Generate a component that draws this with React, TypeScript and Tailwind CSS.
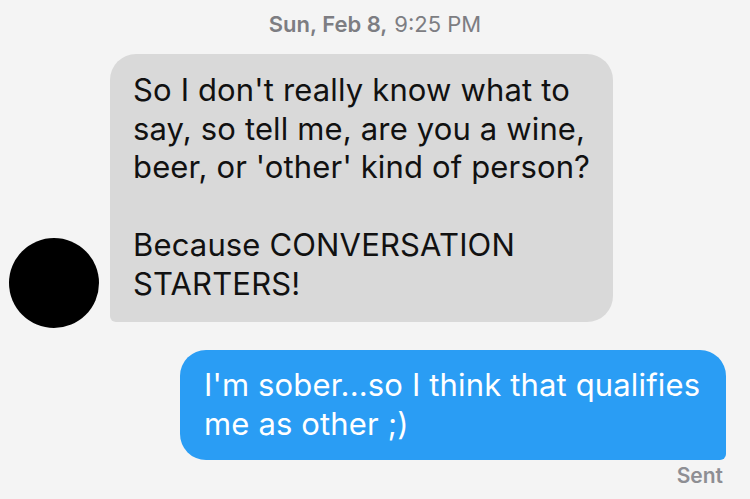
export default function App() {
  const font = { fontFamily: "Inter, 'Liberation Sans', sans-serif" };
  return (
    <div className="w-[750px] h-[499px] overflow-hidden bg-[#f4f4f4] flex flex-col" style={font}>
      <div className="pt-[11px] h-[34px] text-center text-[22px] leading-[26px] text-[#7d7d82]">
        <span className="font-semibold">Sun, Feb 8,</span>
        <span className="ml-[7px]">9:25 PM</span>
      </div>
      <div className="mt-[20px] flex items-end">
        <div className="ml-[9px] mb-[-6px] w-[90px] h-[90px] rounded-full bg-black shrink-0" />
        <div className="ml-[11px] w-[503px] rounded-[26px] rounded-bl-[6px] bg-[#d9d9d9] pl-[23px] pt-[17px] pb-[19px] text-[31px] leading-[38.7px] text-[#111] whitespace-nowrap tracking-[0.15px]">
          So I don't really know what to
          <br />
          say, so tell me, are you a wine,
          <br />
          beer, or 'other' kind of person?
          <br />
          <br />
          Because CONVERSATION
          <br />
          STARTERS!
        </div>
      </div>
      <div className="mt-[28px] flex justify-end pr-[24px]">
        <div className="w-[546px] rounded-[26px] rounded-br-[6px] bg-[#2a9df4] pl-[24px] py-[16px] text-[31px] leading-[38.7px] text-white whitespace-nowrap tracking-[0.15px]">
          I'm sober...so I think that qualifies
          <br />
          me as other ;)
        </div>
      </div>
      <div className="mt-[4px] pr-[27px] text-right text-[21px] leading-[24px] font-semibold text-[#8e8e93]">
        Sent
      </div>
    </div>
  );
}
